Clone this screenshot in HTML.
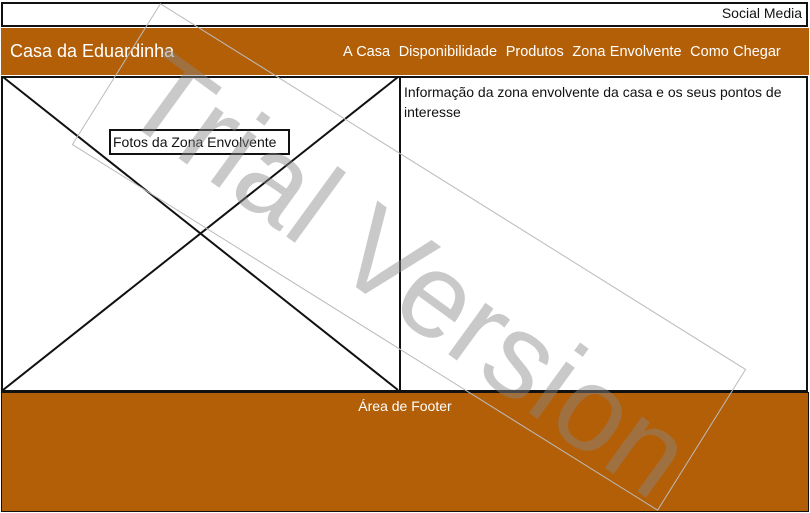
<!DOCTYPE html>
<html><head><style>
body{margin:0;width:810px;height:513px;overflow:hidden;background:#fff;font-family:"Liberation Sans",sans-serif;position:relative}
div{position:absolute;box-sizing:border-box}
</style></head><body>
<div style="left:1px;top:2px;width:807px;height:25px;border:2px solid #111"></div>
<div style="right:8px;top:5px;font-size:14px;color:#111">Social Media</div>
<div style="left:1px;top:28px;width:808px;height:47px;background:#b35f08"></div>
<div style="left:10px;top:41px;font-size:18px;color:#fff">Casa da Eduardinha</div>
<div style="left:343px;top:44px;font-size:14.5px;color:#fff;white-space:nowrap;word-spacing:0.3px">A Casa&nbsp; Disponibilidade&nbsp; Produtos&nbsp; Zona Envolvente&nbsp; Como Chegar</div>
<div style="left:1px;top:76px;width:400px;height:316px;border:2px solid #111"></div>
<div style="left:399px;top:76px;width:409px;height:316px;border:2px solid #111"></div>
<svg style="position:absolute;left:0;top:0" width="810" height="513">
<line x1="3" y1="77" x2="398" y2="390" stroke="#111" stroke-width="2"/>
<line x1="398" y1="77" x2="3" y2="390" stroke="#111" stroke-width="2"/>
</svg>
<div style="left:109px;top:129px;width:181px;height:26px;border:2px solid #111;background:#fff"></div>
<div style="left:113px;top:134px;font-size:14px;color:#111">Fotos da Zona Envolvente</div>
<div style="left:404px;top:82px;width:400px;font-size:14px;line-height:20px;color:#111">Informação da zona envolvente da casa e os seus pontos de interesse</div>
<div style="left:1px;top:392px;width:808px;height:120px;background:#b35f08;border:1px solid #111"></div>
<div style="left:0;width:810px;top:398px;text-align:center;font-size:14px;color:#fff">Área de Footer</div>
<svg style="position:absolute;left:0;top:0" width="810" height="513">
<g transform="translate(409,257) rotate(32)">
<rect x="-345" y="-83" width="690" height="166" fill="none" stroke="#bbb" stroke-width="1"/>
</g>
<g transform="translate(410,272) rotate(36)">
<text x="0" y="44" text-anchor="middle" font-family="Liberation Sans" font-size="120" fill="#888" fill-opacity="0.45">Trial Version</text>
</g>
</svg>
</body></html>
